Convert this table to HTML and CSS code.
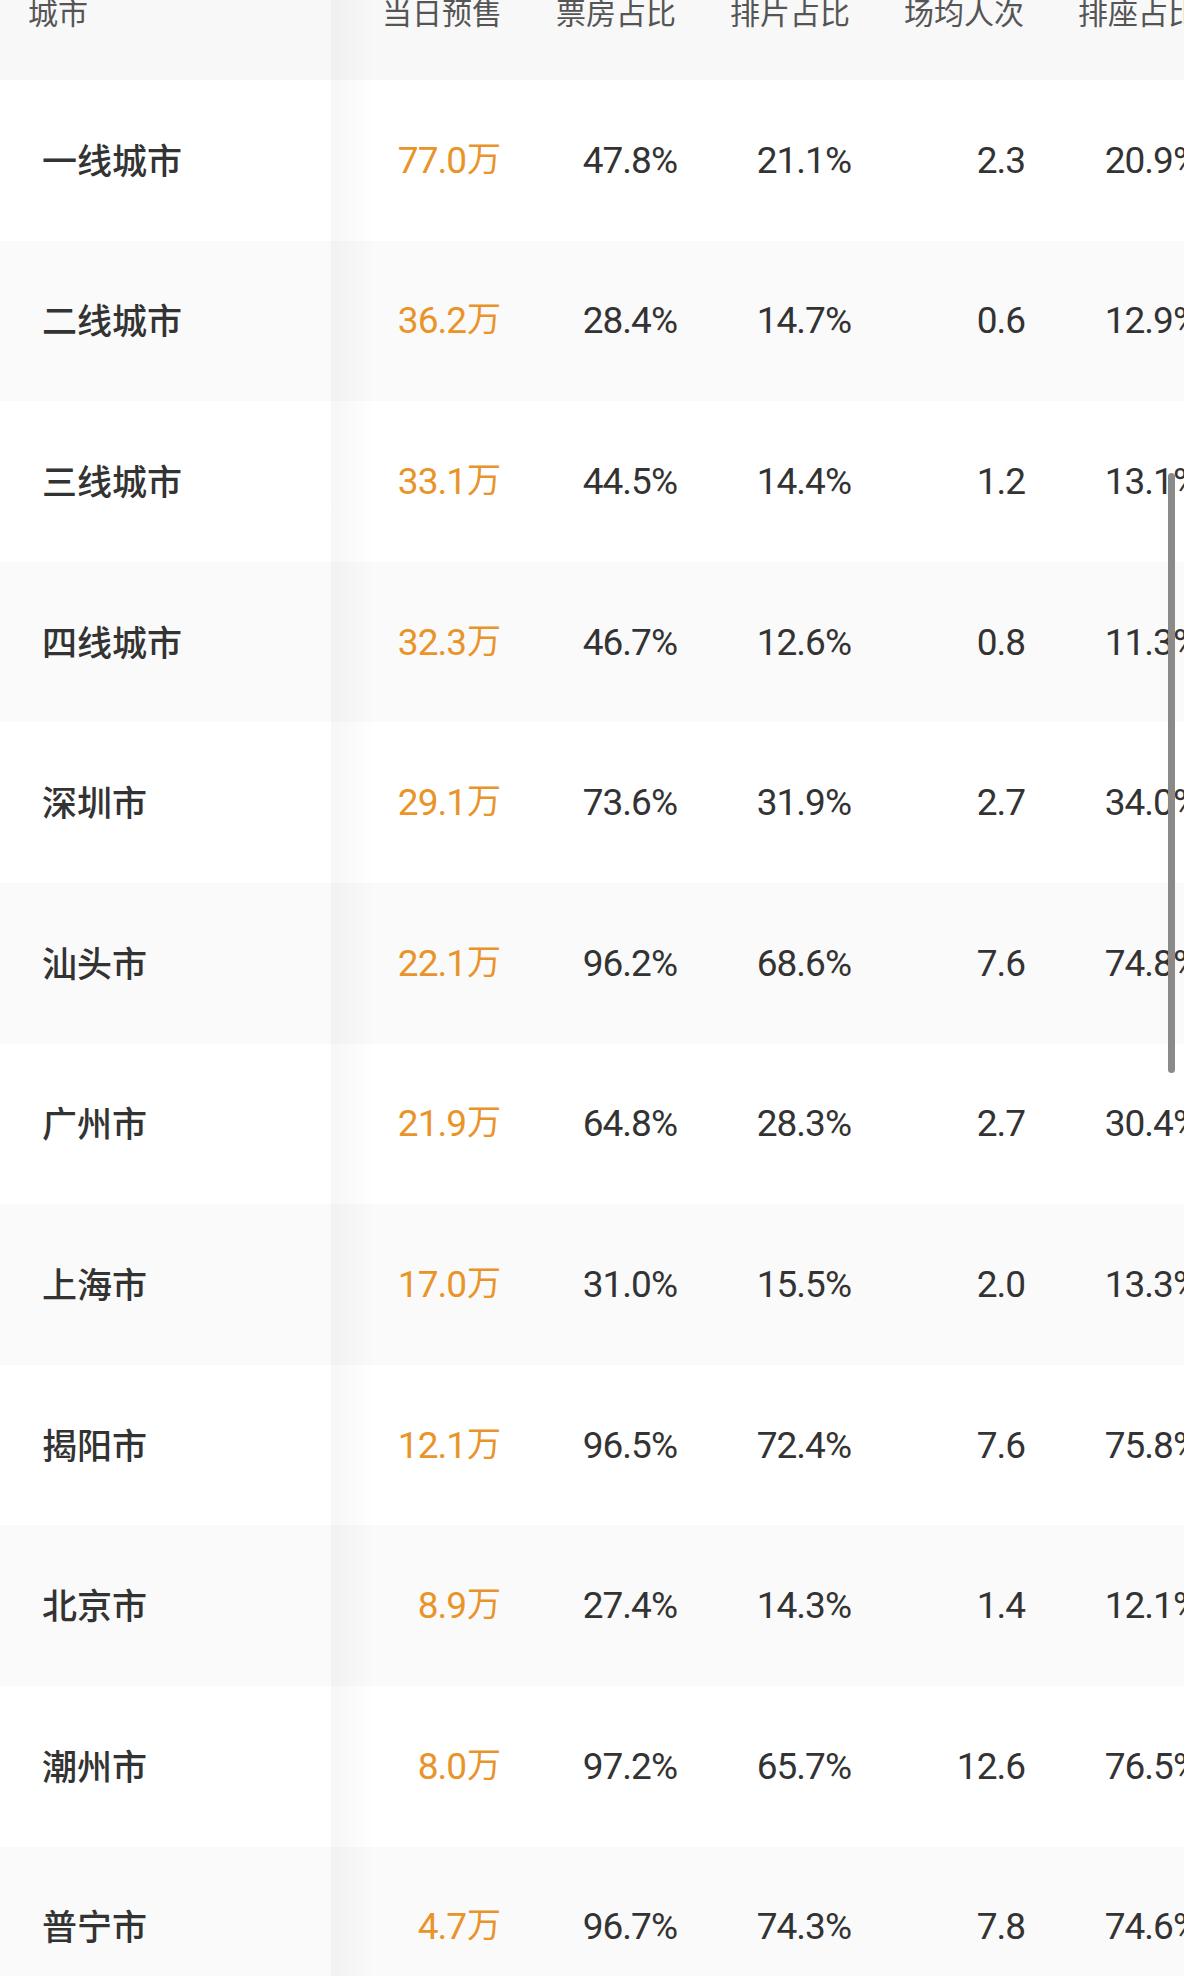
FILE: index.html
```html
<!DOCTYPE html>
<html lang="zh-CN">
<head>
<meta charset="utf-8">
<title>城市票房</title>
<link rel="stylesheet" href="styles.css">
</head>
<body>
<div class="viewport">
  <div class="table">
    <div class="row head">
      <div class="cell city"><span class="htext">城市</span></div>
      <div class="cell num"><span class="htext">当日预售</span></div>
      <div class="cell num"><span class="htext">票房占比</span></div>
      <div class="cell num"><span class="htext">排片占比</span></div>
      <div class="cell num"><span class="htext">场均人次</span></div>
      <div class="cell num"><span class="htext">排座占比</span></div>
    </div>
    <div class="row odd"><div class="cell city">一线城市</div><div class="cell num sale">77.0<span class="wan">万</span></div><div class="cell num">47.8%</div><div class="cell num">21.1%</div><div class="cell num">2.3</div><div class="cell num">20.9%</div></div>
    <div class="row even"><div class="cell city">二线城市</div><div class="cell num sale">36.2<span class="wan">万</span></div><div class="cell num">28.4%</div><div class="cell num">14.7%</div><div class="cell num">0.6</div><div class="cell num">12.9%</div></div>
    <div class="row odd"><div class="cell city">三线城市</div><div class="cell num sale">33.1<span class="wan">万</span></div><div class="cell num">44.5%</div><div class="cell num">14.4%</div><div class="cell num">1.2</div><div class="cell num">13.1%</div></div>
    <div class="row even"><div class="cell city">四线城市</div><div class="cell num sale">32.3<span class="wan">万</span></div><div class="cell num">46.7%</div><div class="cell num">12.6%</div><div class="cell num">0.8</div><div class="cell num">11.3%</div></div>
    <div class="row odd"><div class="cell city">深圳市</div><div class="cell num sale">29.1<span class="wan">万</span></div><div class="cell num">73.6%</div><div class="cell num">31.9%</div><div class="cell num">2.7</div><div class="cell num">34.0%</div></div>
    <div class="row even"><div class="cell city">汕头市</div><div class="cell num sale">22.1<span class="wan">万</span></div><div class="cell num">96.2%</div><div class="cell num">68.6%</div><div class="cell num">7.6</div><div class="cell num">74.8%</div></div>
    <div class="row odd"><div class="cell city">广州市</div><div class="cell num sale">21.9<span class="wan">万</span></div><div class="cell num">64.8%</div><div class="cell num">28.3%</div><div class="cell num">2.7</div><div class="cell num">30.4%</div></div>
    <div class="row even"><div class="cell city">上海市</div><div class="cell num sale">17.0<span class="wan">万</span></div><div class="cell num">31.0%</div><div class="cell num">15.5%</div><div class="cell num">2.0</div><div class="cell num">13.3%</div></div>
    <div class="row odd"><div class="cell city">揭阳市</div><div class="cell num sale">12.1<span class="wan">万</span></div><div class="cell num">96.5%</div><div class="cell num">72.4%</div><div class="cell num">7.6</div><div class="cell num">75.8%</div></div>
    <div class="row even"><div class="cell city">北京市</div><div class="cell num sale">8.9<span class="wan">万</span></div><div class="cell num">27.4%</div><div class="cell num">14.3%</div><div class="cell num">1.4</div><div class="cell num">12.1%</div></div>
    <div class="row odd"><div class="cell city">潮州市</div><div class="cell num sale">8.0<span class="wan">万</span></div><div class="cell num">97.2%</div><div class="cell num">65.7%</div><div class="cell num">12.6</div><div class="cell num">76.5%</div></div>
    <div class="row even"><div class="cell city">普宁市</div><div class="cell num sale">4.7<span class="wan">万</span></div><div class="cell num">96.7%</div><div class="cell num">74.3%</div><div class="cell num">7.8</div><div class="cell num">74.6%</div></div>
  </div>
  <div class="scrollbar"></div>
</div>
</body>
</html>
```

FILE: styles.css
```css
html, body {
  margin: 0;
  padding: 0;
  background: #ffffff;
}
body {
  width: 1184px;
  height: 1976px;
  overflow: hidden;
}
.viewport {
  position: relative;
  width: 1184px;
  height: 1976px;
  overflow: hidden;
}
.table {
  width: 1206px;
  display: flex;
  flex-direction: column;
}
.row {
  display: grid;
  grid-template-columns: 331px repeat(5, 174px);
  height: 160.6px;
  align-items: center;
}
.row.odd { background: #ffffff; }
.row.even { background: #fafafa; }
.row.head {
  height: 80px;
  background: #f8f8f8;
  align-items: start;
}
.cell {
  height: 100%;
  display: flex;
  align-items: center;
  box-sizing: border-box;
}
.cell.city {
  position: relative;
  padding-left: 42px;
  padding-bottom: 4px;
  background: inherit;
  font-family: "Noto Sans CJK SC", sans-serif;
  font-size: 35px;
  font-weight: 500;
  color: #333333;
}
.cell.city::after {
  content: "";
  position: absolute;
  top: 0;
  right: -44px;
  width: 44px;
  height: 100%;
  background: linear-gradient(to right, rgba(0,0,0,0.035), rgba(0,0,0,0));
  pointer-events: none;
}
.cell.num {
  justify-content: flex-end;
  padding-right: 2px;
  font-family: "Roboto", sans-serif;
  font-size: 37px;
  letter-spacing: -1px;
  color: #333333;
}
.cell.sale {
  color: #e9942a;
  padding-right: 4px;
}
.wan {
  font-family: "Noto Sans CJK SC", sans-serif;
  font-size: 34px;
  font-weight: 400;
  letter-spacing: 0;
  margin-left: 1px;
  margin-bottom: 8px;
}
.head .cell {
  align-items: flex-start;
}
.head .cell.city {
  padding-left: 28px;
  padding-bottom: 0;
  font-weight: 400;
}
.head .cell.num {
  padding-right: 3px;
  letter-spacing: 0;
}
.htext {
  display: block;
  margin-top: -4px;
  line-height: 30px;
  font-family: "Noto Sans CJK SC", sans-serif;
  font-size: 30px;
  font-weight: 400;
  color: #555555;
}
.scrollbar {
  position: absolute;
  left: 1168px;
  top: 473px;
  width: 7px;
  height: 600px;
  border-radius: 4px;
  background: #8a8a8a;
}
```
